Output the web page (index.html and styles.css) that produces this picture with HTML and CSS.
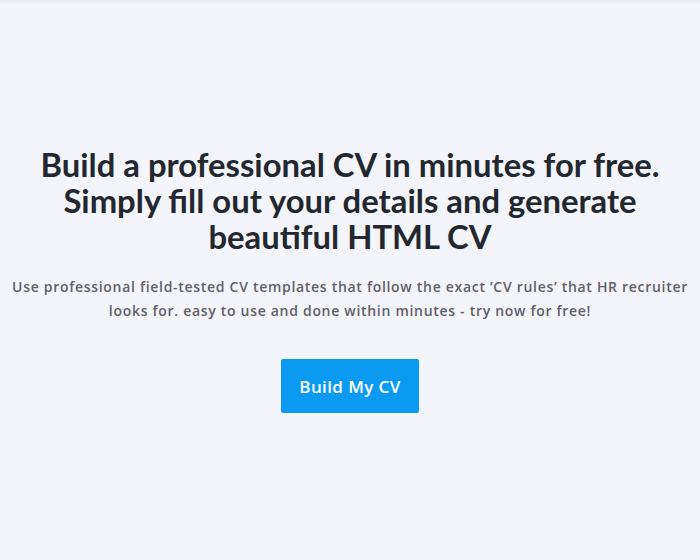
FILE: index.html
```html
<!DOCTYPE html>
<html>
<head>
<meta charset="utf-8">
<link rel="stylesheet" href="styles.css">
</head>
<body>
<div class="topshade"></div>
<main class="hero">
  <h1 class="title">Build a professional CV in minutes for free.<br>Simply fill out your details and generate<br>beautiful HTML CV</h1>
  <p class="lead">Use professional field-tested CV templates that follow the exact ’CV rules’ that HR recruiter<br>looks for. easy to use and done within minutes - try now for free!</p>
  <a class="cta" href="#">Build My CV</a>
</main>
</body>
</html>
```

FILE: styles.css
```css
html, body {
  margin: 0;
  padding: 0;
  background: #f4f5fa;
  height: 100%;
}
.topshade {
  height: 6px;
  background: linear-gradient(#e9eaf0, #f4f5fa);
}
.hero {
  display: flex;
  flex-direction: column;
  align-items: center;
  text-align: center;
  padding: 141px 0 0;
}
.title {
  margin: 0;
  white-space: nowrap;
  font-family: Lato, "Liberation Sans", sans-serif;
  font-weight: 700;
  font-size: 32.8px;
  line-height: 36px;
  color: #23272f;
}
.lead {
  margin: 20px 0 0;
  white-space: nowrap;
  font-family: "Open Sans", sans-serif;
  font-weight: 600;
  font-size: 14px;
  letter-spacing: 0.7px;
  line-height: 24px;
  color: #5f6069;
}
.cta {
  margin-top: 36px;
  display: flex;
  align-items: center;
  justify-content: center;
  width: 138px;
  height: 54px;
  background: #0a9af1;
  color: #fff;
  border-radius: 2px;
  text-decoration: none;
  font-family: "Open Sans", sans-serif;
  font-weight: 600;
  font-size: 17px;
  letter-spacing: 0.4px;
}
```
